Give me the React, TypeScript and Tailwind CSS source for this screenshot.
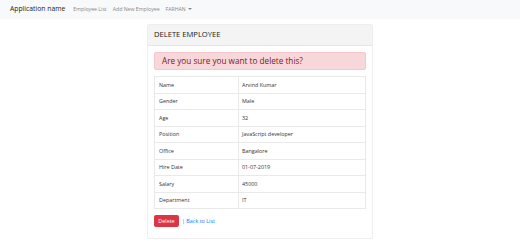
const rows: [string, string][] = [
  ["Name", "Arvind Kumar"],
  ["Gender", "Male"],
  ["Age", "32"],
  ["Position", "JavaScript developer"],
  ["Office", "Bangalore"],
  ["Hire Date", "01-07-2019"],
  ["Salary", "45000"],
  ["Department", "IT"],
];

export default function App() {
  return (
    <div className="w-[520px] h-[245px] bg-white font-['Open_Sans',sans-serif] text-[#212529]">
      <nav className="h-[19px] bg-[#f8f9fa] flex items-center pl-[10px]">
        <span className="text-[6.8px] text-[#222] mr-[8px]">Application name</span>
        <span className="text-[5.2px] text-[#888] mr-[6px]">Employee List</span>
        <span className="text-[5.2px] text-[#888] mr-[6px]">Add New Employee</span>
        <span className="text-[5.2px] text-[#888] flex items-center gap-[2px]">
          FARHAN
          <span className="w-0 h-0 border-x-[2px] border-x-transparent border-t-[2.5px] border-t-[#888]" />
        </span>
      </nav>
      <div className="pt-[5px] pl-[147px]">
        <div className="w-[226px] h-[215px] border border-[#eee] rounded-[2px]">
          <div className="h-[21px] bg-[#f4f4f4] border-b border-[#e6e6e6] flex items-center pl-[6px]">
            <span className="text-[7.6px] text-[#222]">DELETE EMPLOYEE</span>
          </div>
          <div className="px-[6px] pt-[6px]">
            <div className="h-[18px] bg-[#f8d7da] border border-[#f5c6cb] rounded-[2px] flex items-center pl-[7px] text-[8.2px] text-[#721c24]">
              Are you sure you want to delete this?
            </div>
            <table className="mt-[6px] w-[212px] border-collapse">
              <tbody>
                {rows.map(([k, v]) => (
                  <tr key={k} className="h-[16.5px]">
                    <td className="w-[84px] border border-[#e9e9e9] pl-[4px] text-[5.4px] text-[#333]">{k}</td>
                    <td className="border border-[#e9e9e9] pl-[3px] text-[5.4px] text-[#333]">{v}</td>
                  </tr>
                ))}
              </tbody>
            </table>
            <div className="mt-[6px] flex items-center">
              <span className="w-[25px] h-[12px] bg-[#dc3545] rounded-[2px] flex items-center justify-center text-white text-[5.4px]">
                Delete
              </span>
              <span className="ml-[3px] text-[5.4px] text-[#007bff]">| Back to List</span>
            </div>
          </div>
        </div>
      </div>
    </div>
  );
}
